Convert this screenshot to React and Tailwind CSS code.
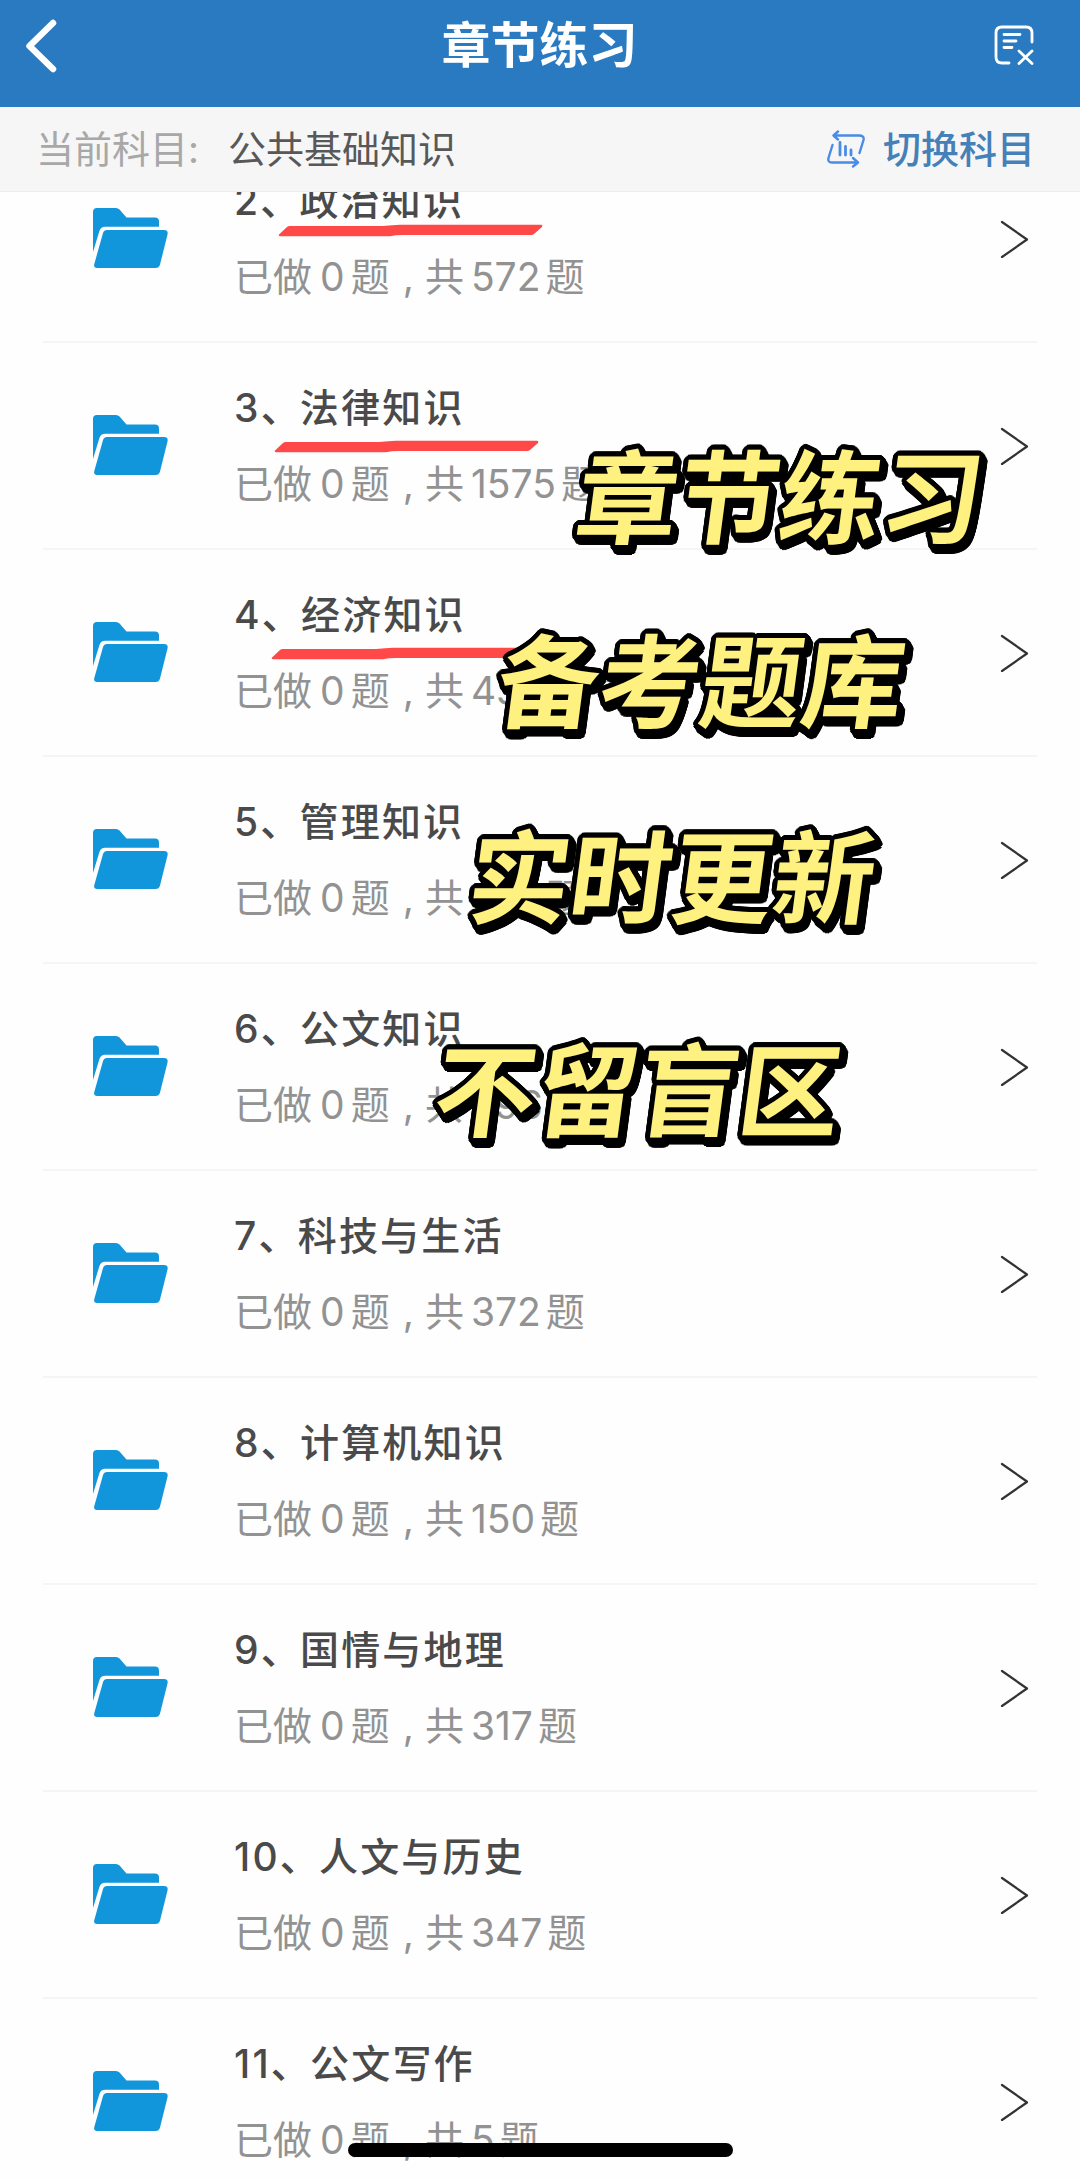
const chapters = [
  { no: 2, name: "政治知识", total: "572", mark: "top-[52px] left-[43px]" },
  { no: 3, name: "法律知识", total: "1575", mark: "top-[61px] left-[39px]" },
  { no: 4, name: "经济知识", total: "430", mark: "top-[61px] left-[36px]" },
  { no: 5, name: "管理知识", total: "577" },
  { no: 6, name: "公文知识", total: "596" },
  { no: 7, name: "科技与生活", total: "372" },
  { no: 8, name: "计算机知识", total: "150" },
  { no: 9, name: "国情与地理", total: "317" },
  { no: 10, name: "人文与历史", total: "347" },
  { no: 11, name: "公文写作", total: "5" },
];

const FONT = "font-['Inter','Noto_Sans_CJK_SC',sans-serif]";

// rounded outline plus a short drop to the lower right
function outline(radius, dx, dy) {
  const list = [];
  for (let s = 0; s <= 3; s++) {
    for (let i = 0; i < 24; i++) {
      const a = (i / 24) * Math.PI * 2;
      const x = Math.cos(a) * radius + (dx * s) / 3;
      const y = Math.sin(a) * radius + (dy * s) / 3;
      list.push(`${x.toFixed(1)}px ${y.toFixed(1)}px 0 #000`);
    }
  }
  return list.join(",");
}
const captionShadow = outline(5, 4, 5);

function FolderIcon() {
  return (
    <svg className="mb-[2px] ml-[50px] h-[60px] w-[75px] shrink-0" viewBox="0 0 75 60" fill="#1296db">
      <path d="M0 44V4Q0 0 4 0H23Q25 0 26.500 1.600L33.500 9.500H62Q66 9.500 66 13.500V18.700H12Q8 18.700 6.500 22.700Z" />
      <path d="M14 22H71Q75.500 22 74.500 26.500L67 56.500Q66 60 62.500 60H4Q0.300 60 1.300 56L10 25Q11 22 14 22Z" />
    </svg>
  );
}

function ChapterRow({ chapter }) {
  return (
    <li className="mx-[43px] flex h-[207px] shrink-0 items-center border-b-2 border-[#f5f5f5]">
      <FolderIcon />
      <div className="relative ml-[67px] flex-1 whitespace-nowrap">
        <h2 className="-ml-px text-[39px] leading-[58px] font-medium tracking-[2.2px] text-[#4a4a4a]">
          {chapter.no}
          <span className="mr-[-2px]">、</span>
          {chapter.name}
        </h2>
        <p className="mt-[18px] -ml-px text-[39px] leading-[58px] font-normal text-[#929292]">
          已做<span className="mr-[6px] ml-[8px]">0</span>题<span className="mr-[11px] ml-[13px]">,</span>共
          <span className="mr-[5px] ml-[7px]">{chapter.total}</span>题
        </p>
        {chapter.mark && (
          <svg className={"absolute h-[13px] w-[265px] " + chapter.mark} viewBox="0 0 265 13" fill="#ff4848">
            <path d="M1 10.500L9 3Q10 2 12 2H105Q115 1 122 0.800H263Q265 1 264 3L256 10Q255 11 253 11H125Q117 11 112 12.300H2Q0 12 1 10.500Z" />
          </svg>
        )}
      </div>
      <svg className="mr-[8px] h-[38px] w-[29px]" viewBox="0 0 29 38" fill="none" stroke="#333" strokeWidth="2.200" strokeLinecap="round" strokeLinejoin="round">
        <path d="M2 2L27 19.500L2 37" />
      </svg>
    </li>
  );
}

function Caption({ className, children }) {
  return (
    <div
      className={"absolute -skew-x-[7.5deg] text-[101.5px] leading-[110px] font-bold whitespace-nowrap text-[#fff180] " + className}
      style={{ textShadow: captionShadow }}
    >
      {children}
    </div>
  );
}

export default function App() {
  return (
    <div lang="zh-CN" className={"relative flex h-[2179px] w-[1080px] flex-col overflow-hidden bg-[#fefefe] " + FONT}>
      <header className="relative z-10 flex h-[107px] shrink-0 items-center justify-between bg-[#2a7ac2] pr-[46px] pb-[16px] pl-[25px]">
        <svg className="h-[54px] w-[40px]" viewBox="0 0 40 54" fill="none" stroke="#fff" strokeWidth="6.500" strokeLinecap="round" strokeLinejoin="round">
          <path d="M28 4L4.500 27L28 50" />
        </svg>
        <h1 className="pl-[20px] text-[49px] leading-[60px] font-bold text-white">章节练习</h1>
        <svg className="mb-[2px] h-[40px] w-[40px]" viewBox="0 0 40 40" fill="none" stroke="#fff" strokeWidth="2.800" strokeLinecap="round">
          <path d="M38 17V8Q38 2 32 2H8Q2 2 2 8V32Q2 38 8 38H15" />
          <path d="M10 9.500H26M10 16H22M10 22.500H18" />
          <path d="M25 26L38 38.500M38 26L25 38.500" />
        </svg>
      </header>

      <div className="relative z-10 flex h-[85px] shrink-0 items-center border-b border-[#ececec] bg-[#f6f6f6] pr-[45px] pl-[36px] text-[38px]">
        <span className="w-[192px] text-[#a8a8a8]">当前科目:</span>
        <span className="flex-1 text-[#585858]">公共基础知识</span>
        <svg className="mr-[18px] h-[38px] w-[38px]" viewBox="0 0 38 38" fill="none" stroke="#4a8be8" strokeWidth="2.400" strokeLinecap="round" strokeLinejoin="round">
          <path d="M11 1.500L6.500 5.500L11 9.500M7 5.500H32Q37.500 5.500 36.500 10L32.500 23" />
          <path d="M26 28L31 32.500L26 36.500M30 32.500H5Q0.500 32.500 1.500 28L5.500 15" />
          <path d="M13 12.500V25M18.500 16.500V25M24 20V25" strokeWidth="2.800" />
        </svg>
        <span className="font-medium text-[#4680b8]">切换科目</span>
      </div>

      <ul className="-mt-[56px] flex flex-col">
        {chapters.map((c) => (
          <ChapterRow key={c.no} chapter={c} />
        ))}
      </ul>

      {/* promo captions floating over the list */}
      <Caption className="top-[444px] left-[577px]">章节练习</Caption>
      <Caption className="top-[628px] left-[498px]">备考题库</Caption>
      <Caption className="top-[824px] left-[469px]">实时更新</Caption>
      <Caption className="top-[1037px] left-[435px]">不留盲区</Caption>

      <div className="absolute top-[2143px] left-[348px] h-[14px] w-[385px] rounded-full bg-black" />
    </div>
  );
}
